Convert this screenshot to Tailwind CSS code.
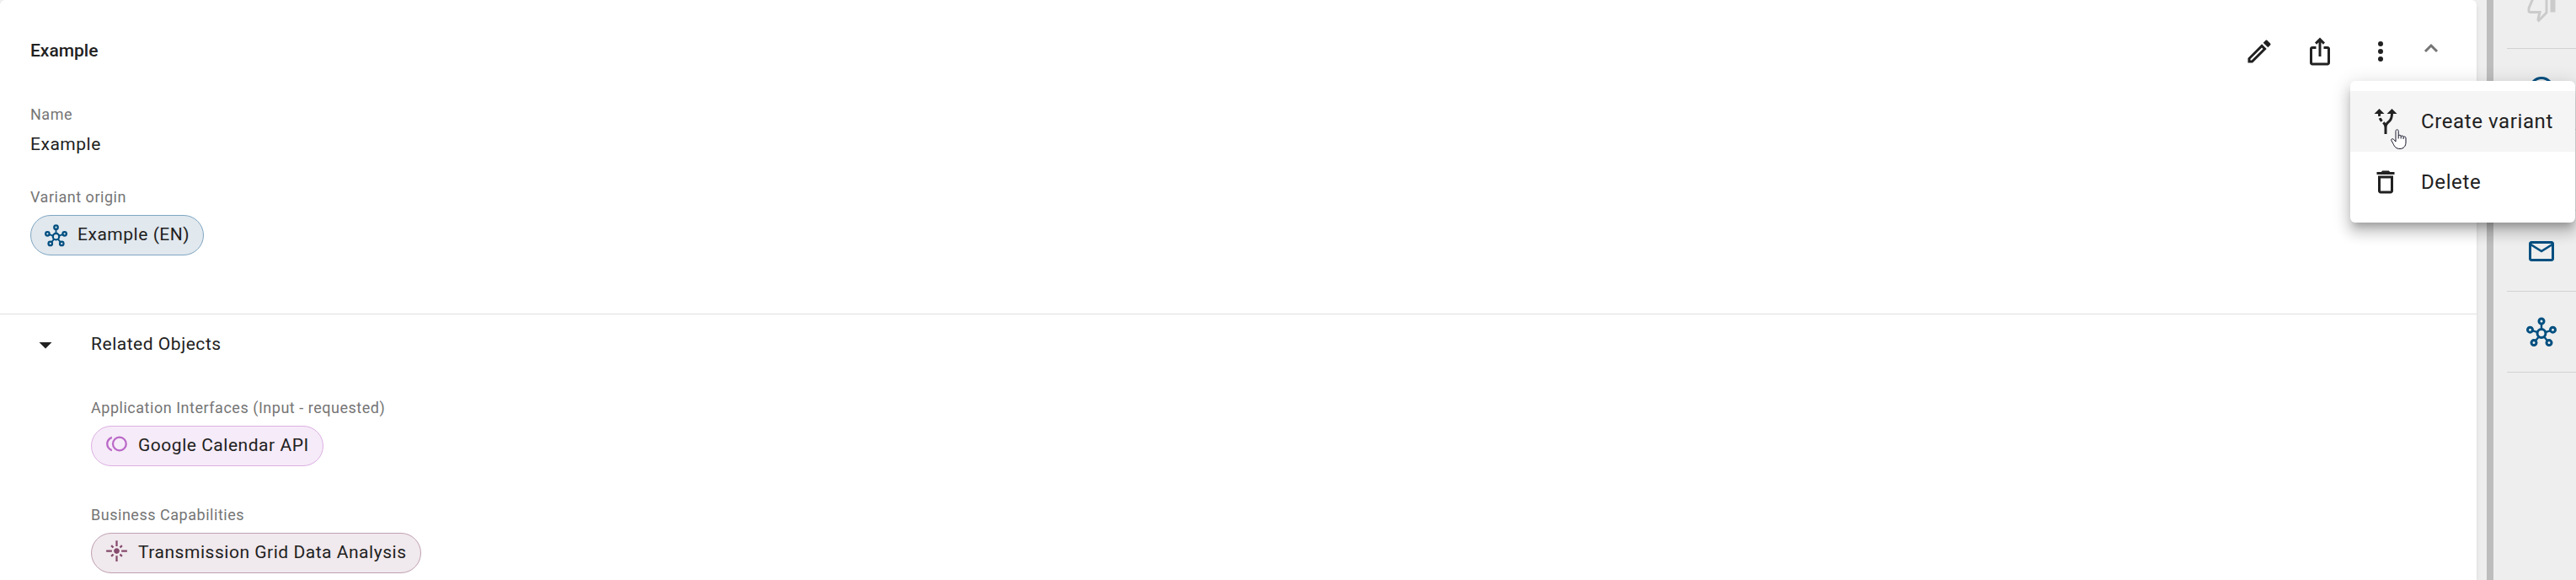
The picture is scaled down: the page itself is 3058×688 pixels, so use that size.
<!DOCTYPE html>
<html lang="en">

<head>
    <meta charset="UTF-8">
    <meta name="viewport" content="width=device-width, initial-scale=1.0">
    <title>Example</title>
    <script src="https://cdn.jsdelivr.net/npm/@tailwindcss/browser@4"></script>
</head>

<body class="relative flex h-screen overflow-hidden bg-[#eeeeee] font-['Roboto',sans-serif] text-[21px] tracking-wide text-[#212121]">
    <svg class="hidden">
        <symbol id="hub" viewBox="0 0 24 24">
            <g fill="none" stroke="currentColor" stroke-width="2">
                <circle cx="12" cy="13" r="3.3" />
                <circle cx="12" cy="3.3" r="2" />
                <circle cx="3" cy="10.1" r="2" />
                <circle cx="21" cy="10.1" r="2" />
                <circle cx="6" cy="20.4" r="2" />
                <circle cx="18" cy="20.4" r="2" />
                <path stroke-width="1.6" d="M12 5v5M4.7 10.7l4.3 1.4M19.3 10.7l-4.3 1.4M7.2 19l2.9-3.600M16.800 19l-2.900-3.600" />
            </g>
        </symbol>
    </svg>

    <main class="min-w-0 flex-1 rounded-t-md bg-white shadow-md">
        <header class="flex h-[121px] items-center justify-between pl-9 pr-[30px]">
            <h1 class="font-medium tracking-normal">Example</h1>
            <div class="flex items-center">
                <button type="button" aria-label="Edit" class="flex size-[72px] items-center justify-center">
                    <svg class="size-9" viewBox="0 0 24 24" fill="currentColor"><path d="M14.06 9.02l.92.92L5.92 19H5v-.92l9.06-9.06M17.66 3c-.25 0-.51.1-.7.29l-1.83 1.83 3.75 3.75 1.83-1.83c.39-.39.39-1.02 0-1.41l-2.34-2.34c-.2-.2-.45-.29-.71-.29zm-3.6 3.19L3 17.25V21h3.75L17.81 9.94l-3.75-3.75z" /></svg>
                </button>
                <button type="button" aria-label="Share" class="flex size-[72px] items-center justify-center">
                    <svg class="size-9" viewBox="0 0 24 24" fill="currentColor"><path d="M16 5l-1.42 1.42-1.59-1.59V16h-1.98V4.83L9.42 6.42 8 5l4-4 4 4zm4 5v11c0 1.1-.9 2-2 2H6c-1.11 0-2-.9-2-2V10c0-1.11.89-2 2-2h3v2H6v11h12V10h-3V8h3c1.1 0 2 .89 2 2z" /></svg>
                </button>
                <button type="button" aria-label="More" aria-haspopup="menu" aria-expanded="true" class="flex size-[72px] items-center justify-center">
                    <svg class="size-9" viewBox="0 0 24 24" fill="currentColor"><circle cx="12" cy="6" r="2" /><circle cx="12" cy="12" r="2" /><circle cx="12" cy="18" r="2" /></svg>
                </button>
                <button type="button" aria-label="Collapse" class="flex h-[72px] w-12 items-center justify-center pb-2 text-[#757575]">
                    <svg class="size-5" viewBox="0 0 20 20" fill="none" stroke="currentColor" stroke-width="3"><path d="M3 14l7-7 7 7" /></svg>
                </button>
            </div>
        </header>

        <section class="px-9 pb-[69px]">
            <div>
                <p class="text-lg/[30px] text-[#757575]">Name</p>
                <p class="leading-10">Example</p>
            </div>
            <div class="mt-7">
                <p class="text-lg/[30px] text-[#757575]">Variant origin</p>
                <a href="#" class="mt-1.5 flex h-12 w-fit items-center gap-3 rounded-full border border-[#7fa6c2] bg-[#e1e8ee] px-4">
                    <svg class="size-[27px] text-[#004f80]"><use href="#hub" /></svg>
                    <span>Example (EN)</span>
                </a>
            </div>
        </section>

        <section class="border-t border-[#e0e0e0]">
            <h2>
                <button type="button" aria-expanded="true" class="flex h-[72px] w-full items-center pl-9">
                    <svg class="mr-9 size-9" viewBox="0 0 24 24" fill="currentColor"><path d="M7 10l5 5 5-5z" /></svg>
                    <span class="tracking-wide">Related Objects</span>
                </button>
            </h2>
            <div class="pl-[108px] pt-6">
                <div>
                    <p class="text-lg/[30px] text-[#757575]">Application Interfaces (Input - requested)</p>
                    <a href="#" class="mt-1.5 flex h-12 w-fit items-center gap-3 rounded-full border border-[#dcb0e3] bg-[#f6ebf8] px-4">
                        <svg class="mb-1.5 size-[27px] text-[#ba68c8]" viewBox="0 0 24 24" fill="currentColor"><circle cx="15" cy="12" r="7" fill="none" stroke="currentColor" stroke-width="2" /><path d="M3 12c0-2.61 1.67-4.83 4-5.65V4.26C3.55 5.15 1 8.27 1 12s2.55 6.85 6 7.74v-2.09c-2.33-.82-4-3.04-4-5.65z" /></svg>
                        <span>Google Calendar API</span>
                    </a>
                </div>
                <div class="mt-[43px]">
                    <p class="text-lg/[30px] text-[#757575]">Business Capabilities</p>
                    <a href="#" class="mt-1.5 flex h-12 w-fit items-center gap-3 rounded-full border border-[#c0a0b2] bg-[#f0e9ed] px-4">
                        <svg class="mb-1.5 size-[27px] text-[#854a6d]" viewBox="0 0 24 24" fill="currentColor"><path d="M7 11H1v2h6v-2zm2.17-3.24L7.05 5.64 5.64 7.05l2.12 2.12 1.41-1.41zM13 1h-2v6h2V1zm5.36 6.05l-1.41-1.41-2.12 2.12 1.41 1.41 2.12-2.12zM17 11v2h6v-2h-6zm-5-2c-1.66 0-3 1.34-3 3s1.34 3 3 3 3-1.34 3-3-1.34-3-3-3zm2.83 7.24l2.12 2.12 1.41-1.41-2.12-2.12-1.41 1.41zm-9.19.71l1.41 1.41 2.12-2.12-1.41-1.41-2.12 2.12zM11 23h2v-6h-2v6z" /></svg>
                        <span>Transmission Grid Data Analysis</span>
                    </a>
                </div>
            </div>
        </section>
    </main>

    <!-- resize handle -->
    <div class="ml-3 w-2 shrink-0 bg-[#bdbdbd]"></div>

    <aside class="w-[98px] shrink-0 pl-4 text-[#004f80]">
        <nav class="-mt-[38px] flex flex-col">
            <a href="#" aria-label="Dislike" class="flex h-24 items-center justify-center border-b border-[#d2d2d2] text-[#cbcbcb]">
                <svg class="size-9" viewBox="0 0 24 24" fill="currentColor"><path d="M15 3H6c-.83 0-1.54.5-1.84 1.22l-3.02 7.05c-.09.23-.14.47-.14.73v2c0 1.1.9 2 2 2h6.31l-.95 4.57-.03.32c0 .41.17.79.44 1.06L9.83 23l6.59-6.59c.36-.36.58-.86.58-1.41V5c0-1.1-.9-2-2-2zm0 12l-4.34 4.34L12 14H3v-2l3-7h9v10zm4-12h4v12h-4z" /></svg>
            </a>
            <a href="#" aria-label="History" class="flex h-24 items-center justify-center border-b border-[#d2d2d2]">
                <svg class="size-9" viewBox="0 0 24 24" fill="none" stroke="currentColor" stroke-width="2"><circle cx="12" cy="12" r="9" /><path d="M12 7v6l4 2" /></svg>
            </a>
            <a href="#" aria-label="Comments" class="flex h-24 items-center justify-center border-b border-[#d2d2d2]">
                <svg class="size-9" viewBox="0 0 24 24" fill="none" stroke="currentColor" stroke-width="2"><path d="M3 3h18v14H7l-4 4z" /></svg>
            </a>
            <a href="#" aria-label="Mail" class="flex h-24 items-center justify-center border-b border-[#d2d2d2]">
                <svg class="size-9" viewBox="0 0 24 24" fill="currentColor"><path d="M22 6c0-1.1-.9-2-2-2H4c-1.1 0-2 .9-2 2v12c0 1.1.9 2 2 2h16c1.1 0 2-.9 2-2V6zm-2 0l-8 5-8-5h16zm0 12H4V8l8 5 8-5v10z" /></svg>
            </a>
            <a href="#" aria-label="Variants" class="flex h-24 items-center justify-center border-b border-[#d2d2d2]">
                <svg class="size-9"><use href="#hub" /></svg>
            </a>
        </nav>
    </aside>

    <!-- context menu -->
    <div role="menu" class="absolute right-px top-24 w-[267px] rounded-md bg-white py-3 text-2xl tracking-wide shadow-[0_8px_8px_-4px_rgba(0,0,0,0.2),0_12px_15px_2px_rgba(0,0,0,0.14),0_4px_21px_3px_rgba(0,0,0,0.12)]">
        <button type="button" role="menuitem" class="flex h-[72px] w-full cursor-pointer items-center gap-6 whitespace-nowrap bg-[#f5f5f5] pl-6">
            <svg class="size-9 shrink-0" viewBox="0 0 24 24" fill="currentColor"><path d="M9.78 11.16l-1.42 1.42c-.68-.69-1.34-1.58-1.79-2.94l1.94-.49c.32.89.77 1.5 1.27 2.01zM11 6L7 2 3 6h3.02c.02.81.08 1.54.19 2.17l1.94-.49C8.08 7.2 8.03 6.63 8.02 6H11zm10 0l-4-4-4 4h2.99c-.1 3.68-1.28 4.75-2.54 5.88-.5.44-1.01.92-1.45 1.55-.34-.49-.73-.88-1.13-1.24L9.46 13.6c.93.85 1.54 1.54 1.54 3.4v5h2v-5c0-2.02.71-2.66 1.79-3.63 1.38-1.24 3.08-2.78 3.2-7.37H21z" /></svg>
            <span>Create variant</span>
        </button>
        <button type="button" role="menuitem" class="flex h-[72px] w-full cursor-pointer items-center gap-6 whitespace-nowrap pl-6">
            <svg class="size-9 shrink-0" viewBox="0 0 24 24" fill="currentColor"><path d="M16 9v10H8V9h8m-1.5-6h-5l-1 1H5v2h14V4h-3.5l-1-1zM18 7H6v12c0 1.1.9 2 2 2h8c1.1 0 2-.9 2-2V7z" /></svg>
            <span>Delete</span>
        </button>
        <!-- pointer -->
        <svg class="absolute left-12 top-[57px] h-6 w-5" viewBox="0 0 20 24" fill="white" stroke="#15152b" stroke-width="1" stroke-linejoin="round"><path d="M6 15V2.5c0-2.3 3.2-2.3 3.2 0V8c.5-1.2 3-.9 3 .6.6-1 2.9-.7 2.9.9.6-.9 2.9-.6 2.9 1.2V16c0 4-2.5 7.500-7 7.500-4.500 0-6.500-2.500-8-6-.7-1.700-2-3-2.300-4.200-.3-1.500 1.800-2.200 3-.8z" /><path fill="none" d="M9.200 8v3.500M12.200 8.500v3M15.100 9.500v2.500" /></svg>
    </div>
</body>

</html>
